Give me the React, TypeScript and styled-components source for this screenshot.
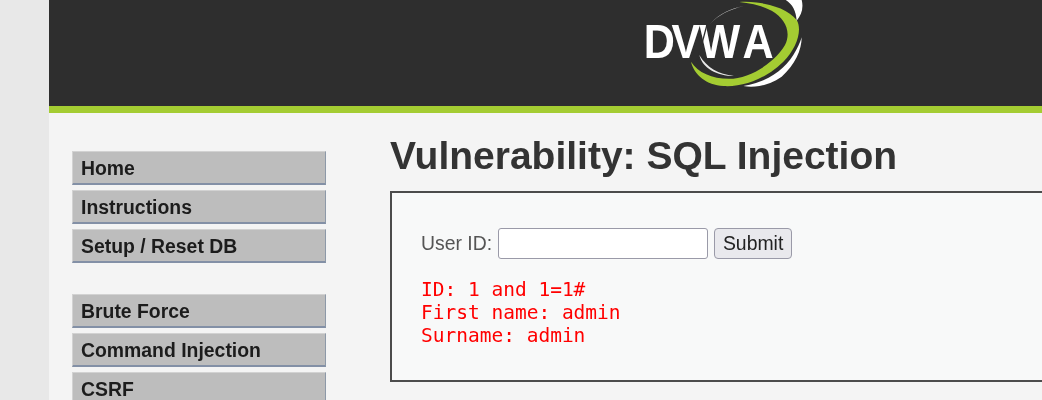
import React from 'react';
import styled, { createGlobalStyle } from 'styled-components';

const menuGroups = [
  ['Home', 'Instructions', 'Setup / Reset DB'],
  ['Brute Force', 'Command Injection', 'CSRF'],
];

const App: React.FC = () => (
  <>
    <GlobalStyle />
    <Page>
      <Header>
        <Logo viewBox="0 0 600 360" aria-label="DVWA">
          <LogoText x="81 176 271 418" y="175" transform="scale(.88 1)">DVWA</LogoText>
          <path d="M262 70 L230 190" stroke="#2e2e2e" strokeWidth="4" fill="none" />
          <path d="M270 72 C295 45 330 28 372 18 C335 24 295 42 270 72 Z" fill="#d8d8d8" />
          <path d="M238 165 C248 205 290 228 342 228 C295 222 262 205 238 165 Z" fill="#e8e8e8" />
          <path d="M358 6 C420 2 500 20 530 60 C548 90 530 145 490 185 C440 235 370 262 310 258 C260 255 222 225 213 185 C235 220 285 240 340 236 C400 230 465 185 495 135 C515 95 495 55 455 32 C425 17 390 9 358 6 Z" fill="#a4cc32" />
          <path d="M490 -4 C515 8 528 30 530 62 C545 45 552 22 544 -4 Z" fill="#fff" />
          <path d="M370 258 C430 250 490 215 520 165 C532 145 540 130 545 112 C545 150 525 195 485 230 C450 255 405 265 370 258 Z" fill="#fff" />
        </Logo>
      </Header>
      <AccentBar />
      <Body>
        <Menu>
          {menuGroups.map((group) => (
            <MenuGroup key={group[0]}>
              {group.map((item) => (
                <MenuItem key={item}>{item}</MenuItem>
              ))}
            </MenuGroup>
          ))}
        </Menu>
        <Main>
          <Title>Vulnerability: SQL Injection</Title>
          <Box>
            <Form>
              <Label>User ID:</Label>
              <Input type="text" />
              <Submit type="button">Submit</Submit>
            </Form>
            <Output>
              ID: 1 and 1=1#
              <br />
              First name: admin
              <br />
              Surname: admin
            </Output>
          </Box>
        </Main>
      </Body>
    </Page>
  </>
);

export default App;

const GlobalStyle = createGlobalStyle`
  html, body {
    margin: 0;
    height: 400px;
    overflow: hidden;
    background: #e8e8e8;
  }
`;

const Page = styled.div`
  margin-left: 49px;
  height: 400px;
  overflow: hidden;
  background: #f4f4f4;
  font-family: 'Liberation Sans', Arial, sans-serif;
  filter: blur(0.4px);
`;

const Header = styled.header`
  height: 106px;
  background: #2e2e2e;
  padding-left: 571px;
  overflow: hidden;
`;

const Logo = styled.svg`
  display: block;
  width: 200px;
  height: 120px;
  filter: blur(0.5px);
`;

const LogoText = styled.text`
  font-family: 'Liberation Sans', Arial, sans-serif;
  font-weight: 700;
  font-size: 147px;
  fill: #fff;
`;

const AccentBar = styled.div`
  height: 7px;
  background: #a4cc32;
`;

const Body = styled.div`
  display: flex;
`;

const Menu = styled.nav`
  width: 254px;
  margin: 38px 64px 0 23px;
  flex: none;
  display: flex;
  flex-direction: column;
  gap: 31px;
`;

const MenuGroup = styled.div`
  display: flex;
  flex-direction: column;
  gap: 5px;
`;

const MenuItem = styled.div`
  box-sizing: border-box;
  height: 34px;
  padding-left: 8px;
  line-height: 32px;
  font-size: 19.4px;
  font-weight: 700;
  color: #1c1c1c;
  background: #bdbdbd;
  border-top: 1px solid #d2d2d2;
  border-right: 1px solid #8d99a8;
  border-bottom: 2px solid #8390a6;
  border-left: 1px solid #d2d2d2;
`;

const Main = styled.main`
  flex: none;
  width: 700px;
`;

const Title = styled.h1`
  margin: 21px 0 13px;
  font-size: 39px;
  line-height: 44px;
  font-weight: 700;
  color: #333;
`;

const Box = styled.div`
  box-sizing: border-box;
  height: 191px;
  padding: 35px 30px 0;
  background: #f8f9f9;
  border: 2px solid #4c4c4c;
  border-right: none;
`;

const Form = styled.div`
  display: flex;
  align-items: center;
  margin-left: -1px;
`;

const Label = styled.label`
  font-size: 19.4px;
  color: #555;
  margin-right: 6px;
`;

const Input = styled.input`
  box-sizing: border-box;
  width: 210px;
  height: 31px;
  margin: 0 6px 0 0;
  padding: 0 4px;
  background: #fff;
  border: 1px solid #9a9aa8;
  border-radius: 3px;
`;

const Submit = styled.button`
  box-sizing: border-box;
  width: 78px;
  height: 31px;
  padding: 0;
  font-family: 'Liberation Sans', Arial, sans-serif;
  font-size: 19.4px;
  color: #222;
  background: #e9e9ed;
  border: 1px solid #9a9aa8;
  border-radius: 4px;
`;

const Output = styled.pre`
  margin: 19px 0 0 -1px;
  font-family: 'DejaVu Sans Mono', monospace;
  font-size: 19.5px;
  line-height: 23px;
  color: #f00;
`;
